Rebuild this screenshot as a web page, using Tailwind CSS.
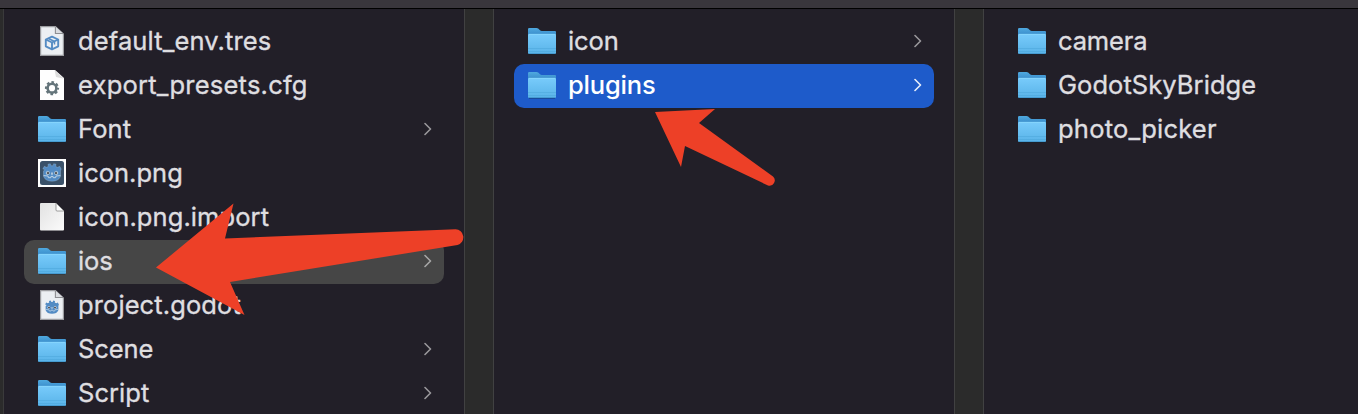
<!DOCTYPE html>
<html lang="en">
<head>
<meta charset="utf-8">
<title>Finder columns</title>
<script src="https://cdn.jsdelivr.net/npm/@tailwindcss/browser@4"></script>
</head>
<body class="relative flex h-[414px] w-[1358px] flex-col overflow-hidden bg-[#221f28] font-['Inter',sans-serif] text-[25.5px] leading-[42px] text-[#dfdee0] [-webkit-text-stroke:0.35px_currentColor]">
<svg class="absolute size-0" aria-hidden="true">
  <defs>
    <linearGradient id="front" x1="0" y1="0" x2="0" y2="1"><stop offset="0" stop-color="#78cbfb"/><stop offset="1" stop-color="#59b3e8"/></linearGradient>
    <linearGradient id="back" x1="0" y1="0" x2="0" y2="1"><stop offset="0" stop-color="#4fa9df"/><stop offset="1" stop-color="#3788c8"/></linearGradient>
    <linearGradient id="paper" x1="0" y1="0" x2="1" y2="1"><stop offset="0" stop-color="#e2e2e2"/><stop offset="1" stop-color="#fbfbfb"/></linearGradient>
    <symbol id="folder" viewBox="0 0 28 28">
      <path d="M1 27.200H27" stroke="#000" stroke-opacity=".35"/>
      <path d="M0 2.200Q0 1 1.200 1H8.500Q9.500 1 10.200 1.600L12 3.200Q12.700 4 13.800 4H27Q28 4 28 5V9H0Z" fill="url(#back)"/>
      <path d="M0 8Q0 7 1 7H27Q28 7 28 8V25.800Q28 27 26.800 27H1.200Q0 27 0 25.800Z" fill="url(#front)"/>
      <path d="M.8 7.300H27.200" stroke="#8fdcff" stroke-width=".7"/>
      <path d="M0 21.500H28M0 24.500H28" stroke="#4ba4d9" stroke-width=".5"/>
      <path d="M.8 26.600H27.200" stroke="#3f91c6" stroke-width=".8"/>
    </symbol>
    <symbol id="chevron" viewBox="0 0 8 14"><path d="M1 1.500 6.500 7 1 12.500" fill="none" stroke="currentColor" stroke-width="1.600" stroke-linecap="round" stroke-linejoin="round"/></symbol>
    <symbol id="godot" viewBox="0 0 20 19">
      <path d="M3 6.500.8 6 2.300 3.300 4.500 4.300 6.300 3.400 6 1.200 8.300.7 9.200 2.700H10.800L11.700.7 14 1.200 13.700 3.400 15.500 4.300 17.700 3.300 19.200 6 18.500 8V13.500Q16.500 18.200 10 18.200T1.500 13.500V8Z" fill="#528bc4"/>
      <path d="M1.600 12.600 6 13 6.400 14.700H8.800L9 13.400H11L11.200 14.700H13.600L14 13 18.400 12.600" fill="none" stroke="#c9dbea" stroke-width=".9"/>
      <circle cx="5.800" cy="10" r="1.800" fill="#e0e6ec"/><circle cx="14.200" cy="10" r="1.800" fill="#e0e6ec"/>
      <circle cx="6" cy="10.100" r="1.250" fill="#414042"/><circle cx="14" cy="10.100" r="1.250" fill="#414042"/>
      <path d="M10 9.500V11.700" stroke="#e9eef2" stroke-width="1.200"/>
    </symbol>
    <symbol id="outlined" viewBox="0 0 24 30">
      <path d="M.6.600H15.400L23.400 8V29.400H.6Z" fill="#eceff3" stroke="#9c9da1" stroke-width="1.200"/>
      <path d="M15.400.600V7.500H23" fill="#dadce0" stroke="#8d8e92" stroke-width="1.100"/>
    </symbol>
    <symbol id="cube" viewBox="0 0 24 30">
      <use href="#outlined"/>
      <path d="M12 10.700 18.200 13.500V20.300L12 23.300 5.800 20.300V13.500ZM5.800 13.500 12 16.500 18.200 13.500M12 16.500V23" fill="none" stroke="#548bc3" stroke-width="1.900" stroke-linejoin="round"/>
      <path d="m8.500 12.500 6 3v3" fill="none" stroke="#548bc3" stroke-width="1.500"/>
    </symbol>
    <symbol id="gear" viewBox="0 0 24 30">
      <path d="M0 0H15L24 8V30H0Z" fill="#fefefe"/>
      <path d="M14.500 0 24 8.800 16 7Z" fill="#dddddd"/>
      <circle cx="12" cy="18.200" r="4.400" fill="none" stroke="#64747a" stroke-width="2.600"/>
      <circle cx="12" cy="18.200" r="6" fill="none" stroke="#64747a" stroke-width="2.200" stroke-dasharray="2.600 2.112" stroke-dashoffset="1.300"/>
    </symbol>
    <symbol id="project" viewBox="0 0 24 30"><use href="#outlined"/><use href="#godot" x="4.500" y="10" width="15" height="14.250"/></symbol>
    <symbol id="blank" viewBox="0 0 24 30">
      <path d="M0 2Q0 1 1 1H16L24 9V27.500Q24 28.500 23 28.500H1Q0 28.500 0 27.500Z" fill="url(#paper)"/>
      <path d="M16 1 24 9H17Q16 9 16 8Z" fill="#fff" stroke="#777" stroke-width=".7"/>
    </symbol>
    <symbol id="thumb" viewBox="0 0 28 28"><path d="M0 0H28V28H0Z" fill="#fff"/><rect x="2" y="2" width="24" height="24" rx="2.500" fill="#3a5169"/><g stroke="#b9cfe2" stroke-width=".3"><use href="#godot" x="4" y="4" width="20" height="19"/></g></symbol>
  </defs>
</svg>
<header class="h-[9px] shrink-0 border-b border-black bg-[#39363c]"></header>
<main class="flex min-h-0 flex-1 overflow-hidden">
  <div class="w-1 shrink-0 border-r border-[#3a3a3b] bg-[#2b2b2b]"></div>
  <ul class="w-[460px] shrink-0 px-5 pt-[11px]">
    <li class="flex h-11 items-center pb-0.5 pl-4"><svg class="h-[30px] w-6"><use href="#cube"/></svg><span class="ml-[14px] tracking-[0.12px]">default_env.tres</span></li>
    <li class="flex h-11 items-center pb-0.5 pl-4"><svg class="h-[30px] w-6"><use href="#gear"/></svg><span class="ml-[14px] tracking-[0.22px]">export_presets.cfg</span></li>
    <li class="flex h-11 items-center pb-0.5 pl-[14px] pr-3"><svg class="size-7"><use href="#folder"/></svg><span class="ml-3 flex-1 tracking-[0.1px]">Font</span><svg class="h-[14px] w-2 text-[#99979b]"><use href="#chevron"/></svg></li>
    <li class="flex h-11 items-center pb-0.5 pl-[14px]"><svg class="size-7"><use href="#thumb"/></svg><span class="ml-3 tracking-[0px]">icon.png</span></li>
    <li class="flex h-11 items-center pb-0.5 pl-4"><svg class="h-[30px] w-6"><use href="#blank"/></svg><span class="ml-[14px] tracking-[0.08px]">icon.png.import</span></li>
    <li class="flex h-11 items-center rounded-[10px] bg-[#464646] pb-0.5 pl-[14px] pr-3"><svg class="size-7"><use href="#folder"/></svg><span class="ml-3 flex-1 tracking-[-0.1px]">ios</span><svg class="h-[14px] w-2 text-[#a6a6a6]"><use href="#chevron"/></svg></li>
    <li class="flex h-11 items-center pb-0.5 pl-4"><svg class="h-[30px] w-6"><use href="#project"/></svg><span class="ml-[14px] tracking-[0.1px]">project.godot</span></li>
    <li class="flex h-11 items-center pb-0.5 pl-[14px] pr-3"><svg class="size-7"><use href="#folder"/></svg><span class="ml-3 flex-1 tracking-[-0.1px]">Scene</span><svg class="h-[14px] w-2 text-[#99979b]"><use href="#chevron"/></svg></li>
    <li class="flex h-11 items-center pb-0.5 pl-[14px] pr-3"><svg class="size-7"><use href="#folder"/></svg><span class="ml-3 flex-1 tracking-[0.05px]">Script</span><svg class="h-[14px] w-2 text-[#99979b]"><use href="#chevron"/></svg></li>
  </ul>
  <div class="w-[30px] shrink-0 border-x border-[#414142] bg-[#2b2b2b]"></div>
  <ul class="w-[460px] shrink-0 px-5 pt-[11px]">
    <li class="flex h-11 items-center pb-0.5 pl-[14px] pr-3"><svg class="size-7"><use href="#folder"/></svg><span class="ml-3 flex-1 tracking-[-0.1px]">icon</span><svg class="h-[14px] w-2 text-[#99979b]"><use href="#chevron"/></svg></li>
    <li class="flex h-11 items-center rounded-[10px] bg-[#1e5bca] pb-0.5 pl-[14px] pr-3 text-white"><svg class="size-7"><use href="#folder"/></svg><span class="ml-3 flex-1 font-medium tracking-[-0.18px] [-webkit-text-stroke:0]">plugins</span><svg class="h-[14px] w-2 text-[#e8eefa]"><use href="#chevron"/></svg></li>
  </ul>
  <div class="w-[30px] shrink-0 border-x border-[#414142] bg-[#2b2b2b]"></div>
  <ul class="flex-1 px-5 pt-[11px]">
    <li class="flex h-11 items-center pb-0.5 pl-[14px]"><svg class="size-7"><use href="#folder"/></svg><span class="ml-3 tracking-[-0.15px]">camera</span></li>
    <li class="flex h-11 items-center pb-0.5 pl-[14px]"><svg class="size-7"><use href="#folder"/></svg><span class="ml-3 tracking-[0.06px]">GodotSkyBridge</span></li>
    <li class="flex h-11 items-center pb-0.5 pl-[14px]"><svg class="size-7"><use href="#folder"/></svg><span class="ml-3 tracking-[0.22px]">photo_picker</span></li>
  </ul>
</main>
<svg class="pointer-events-none absolute inset-0 h-[414px] w-[1358px]" viewBox="0 0 1358 414" fill="#ed4027">
  <path d="M156 267.500 233.500 203.500 225 238.500 455.500 229.300A8 8 0 0 1 457.500 245L230 282 244.500 315Z"/>
  <path d="M655 112 715 109 699 123 773 176.500A5.300 5.300 0 0 1 768 185.500L685 146 681 167Z"/>
</svg>
</body>
</html>
